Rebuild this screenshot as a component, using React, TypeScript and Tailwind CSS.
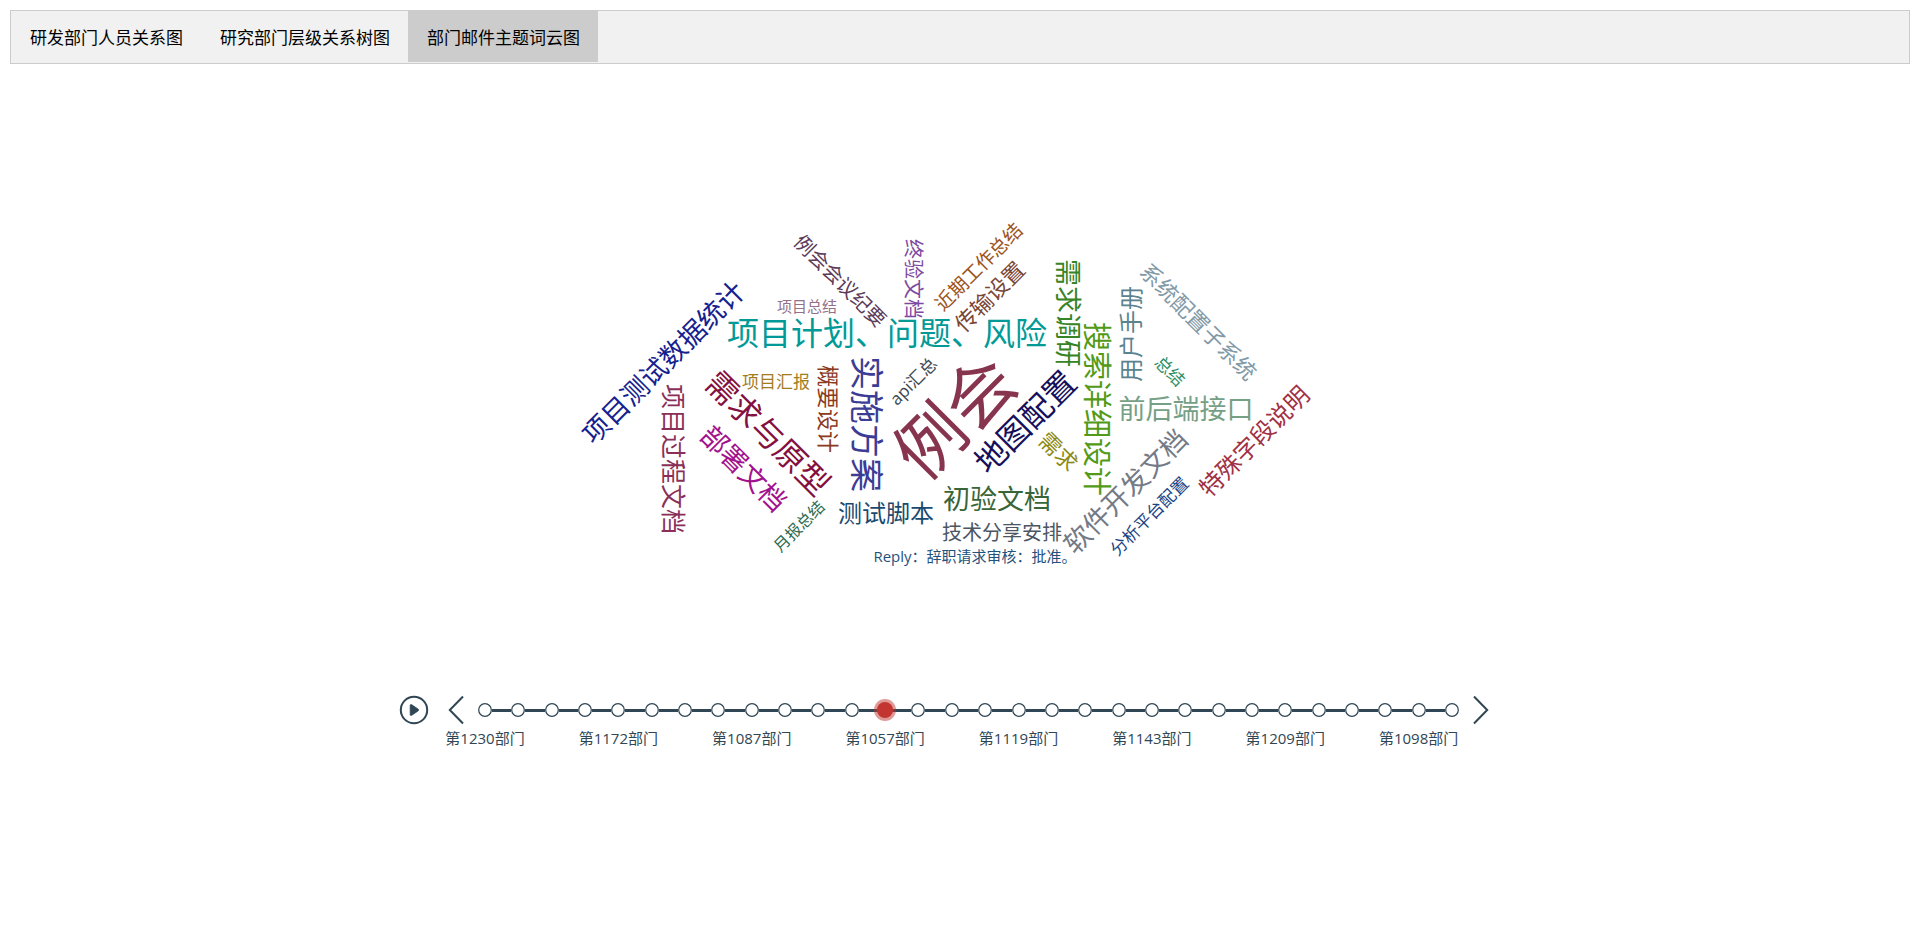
import { useState } from 'react';

type Word = {
  text: string;
  x: number;
  y: number;
  size: number;
  angle: -90 | -45 | 0 | 45 | 90;
  color: string;
};

const TABS = ['研发部门人员关系图', '研究部门层级关系树图', '部门邮件主题词云图'];

/* Word centres, measured from the top left corner of the cloud. */
const WORDS: Word[] = [
  { text: '例会', x: 381, y: 206, size: 69, angle: -45, color: '#87344f' },
  { text: '实施方案', x: 294, y: 214, size: 34, angle: 90, color: '#3c3c94' },
  { text: '项目计划、问题、风险', x: 314, y: 123, size: 32, angle: 0, color: '#029a97' },
  { text: '需求与原型', x: 195, y: 223, size: 32, angle: 45, color: '#83103f' },
  { text: '地图配置', x: 452, y: 212, size: 32, angle: -45, color: '#150f5c' },
  { text: '搜索详细设计', x: 524, y: 199, size: 29, angle: 90, color: '#529a17' },
  { text: '部署文档', x: 171, y: 258, size: 27, angle: 45, color: '#a2118d' },
  { text: '项目测试数据统计', x: 90, y: 152, size: 27, angle: -45, color: '#14218f' },
  { text: '需求调研', x: 495, y: 103, size: 27, angle: 90, color: '#378427' },
  { text: '初验文档', x: 424, y: 288, size: 27, angle: 0, color: '#386638' },
  { text: '前后端接口', x: 613, y: 198, size: 27, angle: 0, color: '#76a086' },
  { text: '软件开发文档', x: 552, y: 281, size: 27, angle: -45, color: '#747a86' },
  { text: '项目过程文档', x: 100, y: 249, size: 25, angle: 90, color: '#8a2f58' },
  { text: '测试脚本', x: 313, y: 303, size: 24, angle: 0, color: '#1b4a70' },
  { text: '用户手册', x: 558, y: 124, size: 24, angle: -90, color: '#5a828f' },
  { text: '特殊字段说明', x: 681, y: 231, size: 24, angle: -45, color: '#a13145' },
  { text: '概要设计', x: 256, y: 199, size: 22, angle: 90, color: '#8c3a1c' },
  { text: '系统配置子系统', x: 626, y: 111, size: 22, angle: 45, color: '#8299a6' },
  { text: '传输设置', x: 416, y: 86, size: 22, angle: -45, color: '#7a4636' },
  { text: '需求', x: 486, y: 241, size: 22, angle: 45, color: '#8c8a14' },
  { text: '例会会议纪要', x: 267, y: 71, size: 20, angle: 45, color: '#5c3a58' },
  { text: '终验文档', x: 340, y: 69, size: 20, angle: 90, color: '#7d4aa2' },
  { text: '技术分享安排', x: 429, y: 323, size: 20, angle: 0, color: '#4c5663' },
  { text: '近期工作总结', x: 406, y: 57, size: 19, angle: -45, color: '#9b5420' },
  { text: '分析平台配置', x: 576, y: 306, size: 17, angle: -45, color: '#1c4484' },
  { text: '项目汇报', x: 203, y: 171, size: 17, angle: 0, color: '#a57c1c' },
  { text: '总结', x: 597, y: 161, size: 17, angle: 45, color: '#2b8f68' },
  { text: 'api汇总', x: 340, y: 171, size: 17, angle: -45, color: '#3c4650' },
  { text: '项目总结', x: 234, y: 96, size: 15, angle: 0, color: '#94708a' },
  { text: '月报总结', x: 226, y: 316, size: 16, angle: -45, color: '#2e6b50' },
  { text: 'Reply：辞职请求审核：批准。', x: 402, y: 346, size: 15, angle: 0, color: '#1f527c' },
];

const ROTATION = {
  [-90]: '-rotate-90',
  [-45]: '-rotate-45',
  0: 'rotate-0',
  45: 'rotate-45',
  90: 'rotate-90',
};

const POINT_COUNT = 30;
const LABEL_STEP = 4;
const LABELS = [
  '第1230部门',
  '第1172部门',
  '第1087部门',
  '第1057部门',
  '第1119部门',
  '第1143部门',
  '第1209部门',
  '第1098部门',
];

function TabBar() {
  const [active, setActive] = useState(2);
  return (
    <nav className="flex border border-[#cccccc] bg-[#f1f1f1] pb-px">
      {TABS.map((tab, i) => (
        <button
          key={tab}
          type="button"
          onClick={() => setActive(i)}
          className={`h-[51px] pt-[2px] pl-[19px] pr-[18px] text-[17px] text-black ${
            i === active ? 'bg-[#cccccc]' : 'hover:bg-[#dddddd]'
          }`}
        >
          {tab}
        </button>
      ))}
    </nav>
  );
}

function WordCloud() {
  return (
    <div className="relative mx-auto h-[370px] w-[750px]">
      {WORDS.map((word) => (
        <span
          key={word.text}
          className={`absolute -translate-x-1/2 -translate-y-1/2 leading-none whitespace-nowrap ${ROTATION[word.angle]}`}
          style={{ left: word.x, top: word.y, fontSize: word.size, color: word.color }}
        >
          {word.text}
        </span>
      ))}
    </div>
  );
}

function Timeline() {
  const [current, setCurrent] = useState(12);
  const last = POINT_COUNT - 1;
  return (
    <div className="mx-auto flex w-[1126px] max-w-full items-start pl-[14px] pr-[22px] text-[#304654]">
      <button type="button" aria-label="播放" className="mr-[19px] size-[30px] shrink-0">
        <svg viewBox="0 0 30 30" className="size-full" fill="none">
          <circle cx="15" cy="15" r="13.2" stroke="currentColor" strokeWidth="2" />
          <path
            d="M11.2 10.4 Q11.2 9 12.8 9.8 L19 14 Q20.4 15 19 16 L12.8 20.2 Q11.2 21 11.2 19.6 Z"
            fill="currentColor"
            stroke="currentColor"
            strokeWidth="0.8"
          />
        </svg>
      </button>
      <button
        type="button"
        aria-label="上一个"
        onClick={() => setCurrent(Math.max(0, current - 1))}
        className="mr-[14px] h-[30px] w-4 shrink-0"
      >
        <svg viewBox="0 0 16 30" className="size-full" fill="none">
          <path d="M15 1.5 L1.8 15 L15 28.5" stroke="currentColor" strokeWidth="2" />
        </svg>
      </button>
      <ol className="flex min-w-0 flex-1">
        {Array.from({ length: POINT_COUNT }, (_, i) => (
          <li key={i} className={i < last ? 'min-w-0 flex-1' : 'w-[14px]'}>
            <div className="flex h-[30px] items-center">
              <button
                type="button"
                aria-label={`节点 ${i + 1}`}
                onClick={() => setCurrent(i)}
                className="relative z-10 size-[14px] shrink-0"
              >
                <svg viewBox="0 0 14 14" className="size-full overflow-visible">
                  {i === current ? (
                    <>
                      <circle cx="7" cy="7" r="11" fill="#c23531" fillOpacity="0.5" />
                      <circle cx="7" cy="7" r="8" fill="#c23531" />
                    </>
                  ) : (
                    <circle cx="7" cy="7" r="6.3" fill="#ffffff" stroke="currentColor" strokeWidth="1.25" />
                  )}
                </svg>
              </button>
              {i < last && <span className="h-[3px] flex-1 bg-[#304654]" />}
            </div>
            {i % LABEL_STEP === 0 && (
              <div className="mt-[3px] flex w-[14px] justify-center text-[15px] leading-5 whitespace-nowrap">
                {LABELS[i / LABEL_STEP]}
              </div>
            )}
          </li>
        ))}
      </ol>
      <button
        type="button"
        aria-label="下一个"
        onClick={() => setCurrent(Math.min(last, current + 1))}
        className="ml-[14px] h-[30px] w-4 shrink-0"
      >
        <svg viewBox="0 0 16 30" className="size-full" fill="none">
          <path d="M1 1.5 L14.2 15 L1 28.5" stroke="currentColor" strokeWidth="2" />
        </svg>
      </button>
    </div>
  );
}

export default function App() {
  return (
    <div className="bg-white p-[10px] font-['Open_Sans','Noto_Sans_CJK_SC',sans-serif]">
      <TabBar />
      <main className="flex w-[1876px] max-w-full flex-col gap-[115px] pt-[146px]">
        <WordCloud />
        <Timeline />
      </main>
    </div>
  );
}
